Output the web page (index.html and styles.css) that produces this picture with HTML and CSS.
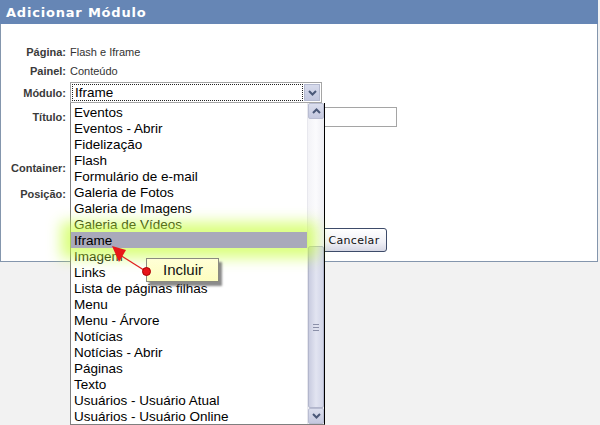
FILE: index.html
```html
<!DOCTYPE html>
<html lang="pt">
<head>
<meta charset="utf-8">
<title>Adicionar Módulo</title>
<link rel="stylesheet" href="styles.css">
</head>
<body>
<div class="window">
  <div class="header">Adicionar Módulo</div>
  <div class="panel">
    <div class="row r-pagina"><span class="label">Página:</span><span class="value">Flash e Iframe</span></div>
    <div class="row r-painel"><span class="label">Painel:</span><span class="value">Conteúdo</span></div>
    <div class="row r-modulo"><span class="label">Módulo:</span>
      <div class="select">
        <div class="select-text">Iframe</div>
        <div class="drop-btn"><svg width="9" height="6" viewBox="0 0 9 6"><path d="M1 1 L4.5 4.5 L8 1" fill="none" stroke="#4a5878" stroke-width="2"/></svg></div>
      </div>
    </div>
    <div class="row r-titulo"><span class="label">Título:</span><div class="input"></div></div>
    <div class="row r-container"><span class="label">Container:</span><div class="hidden-select"></div></div>
    <div class="row r-posicao"><span class="label">Posição:</span><div class="hidden-select"></div></div>
    <div class="row r-buttons"><span class="label"></span>
      <button class="btn btn-cancelar">Cancelar</button>
    </div>
  </div>
</div>

<div class="dropdown">
  <div class="items">
    <div class="item">Eventos</div>
    <div class="item">Eventos - Abrir</div>
    <div class="item">Fidelização</div>
    <div class="item">Flash</div>
    <div class="item">Formulário de e-mail</div>
    <div class="item">Galeria de Fotos</div>
    <div class="item">Galeria de Imagens</div>
    <div class="item">Galeria de Vídeos</div>
    <div class="item selected">Iframe</div>
    <div class="item">Imagem</div>
    <div class="item">Links</div>
    <div class="item">Lista de páginas filhas</div>
    <div class="item">Menu</div>
    <div class="item">Menu - Árvore</div>
    <div class="item">Notícias</div>
    <div class="item">Notícias - Abrir</div>
    <div class="item">Páginas</div>
    <div class="item">Texto</div>
    <div class="item">Usuários - Usuário Atual</div>
    <div class="item">Usuários - Usuário Online</div>
  </div>
  <div class="scrollbar">
    <div class="sb-btn"><svg width="9" height="6" viewBox="0 0 9 6"><path d="M1 5 L4.5 1.5 L8 5" fill="none" stroke="#4a5878" stroke-width="2"/></svg></div>
    <div class="sb-track"></div>
    <div class="sb-thumb"><div class="grip"></div><div class="grip"></div><div class="grip"></div></div>
    <div class="sb-btn"><svg width="9" height="6" viewBox="0 0 9 6"><path d="M1 1 L4.5 4.5 L8 1" fill="none" stroke="#4a5878" stroke-width="2"/></svg></div>
  </div>
</div>

<div class="glow"></div>

<svg class="arrow" width="60" height="40" viewBox="0 0 60 40">
  <line x1="37" y1="26" x2="10" y2="9" stroke="#e02020" stroke-width="1.3"/>
  <polygon points="2,0 16,4 9,16" fill="#e81818"/>
</svg>
<div class="tooltip">Incluir</div>
<div class="dot"></div>
</body>
</html>
```
FILE: styles.css
```css
html, body {
  margin: 0;
  padding: 0;
  overflow: hidden;
  width: 600px;
  height: 425px;
  background: #f2f2f2;
  font-family: "Liberation Sans", Arial, sans-serif;
}
.window {
  width: 598px;
}
.header {
  height: 24px;
  background: #6686b5;
  color: #fff;
  font-family: "DejaVu Sans", sans-serif;
  font-weight: bold;
  font-size: 13px;
  letter-spacing: 0.8px;
  line-height: 25px;
  padding-left: 6px;
}
.panel {
  background: #fff;
  border: 1px solid #8496ad;
  border-top: none;
  height: 238px;
  box-sizing: border-box;
  padding-top: 18px;
  display: flex;
  flex-direction: column;
}
.row {
  display: flex;
  align-items: center;
  gap: 4px;
}
.label {
  width: 65px;
  text-align: right;
  font-weight: bold;
  font-size: 11px;
  color: #3a3a3a;
  flex: none;
}
.value {
  font-size: 11px;
  color: #333;
}
.r-pagina { height: 19px; }
.r-painel { height: 19px; }
.r-modulo { height: 21px; margin-top: 2px; }
.r-titulo { height: 22px; margin-top: 3px; align-items: flex-start; }
.r-titulo .label { margin-top: 5px; }
.r-container { height: 21px; margin-top: 29px; }
.r-posicao { height: 21px; margin-top: 5px; }
.r-buttons { height: 24px; margin-top: 24px; gap: 4px; }

.select {
  width: 252px;
  height: 21px;
  box-sizing: border-box;
  border: 1px solid #a5a5a5;
  display: flex;
  padding: 1px;
  gap: 1px;
  background: #fff;
}
.select-text {
  flex: 1;
  border: 1px dotted #222;
  font-family: "Liberation Sans", Arial, sans-serif;
  font-size: 13.5px;
  line-height: 15px;
  padding-left: 2px;
  color: #000;
}
.drop-btn {
  width: 16px;
  background: linear-gradient(#d7dbec, #c2c7df);
  border: 1px solid #b4b9cf;
  box-sizing: border-box;
  display: flex;
  align-items: center;
  justify-content: center;
}
.input {
  width: 327px;
  height: 20px;
  box-sizing: border-box;
  border: 1px solid #a5a5a5;
  margin-top: 1px;
}
.hidden-select {
  width: 200px;
  height: 20px;
  border: 1px solid #a5a5a5;
  box-sizing: border-box;
}
.btn {
  height: 24px;
  border: 1px solid #3d4b69;
  border-radius: 3px;
  background: linear-gradient(#ffffff, #f0f0f6 60%, #d6d7e4);
  font-family: "DejaVu Sans", sans-serif;
  font-size: 11px;
  letter-spacing: 0.3px;
  color: #111;
  padding: 0 6px;
}
.btn-cancelar { margin-left: 251px; width: 66px; }

.dropdown {
  position: absolute;
  left: 70px;
  top: 103px;
  width: 255px;
  height: 322px;
  box-sizing: border-box;
  border: 1px solid #7f7f7f;
  border-right-color: #000;
  border-top: none;
  background: #fff;
  display: flex;
}
.items {
  flex: 1;
  padding-top: 1px;
}
.item {
  height: 16px;
  line-height: 17px;
  padding-left: 3px;
  font-family: "Liberation Sans", Arial, sans-serif;
  font-size: 13.5px;
  color: #000;
  white-space: nowrap;
}
.item.selected {
  background: #a9a9ba;
}
.scrollbar {
  width: 16px;
  display: flex;
  flex-direction: column;
  position: relative;
  background: linear-gradient(90deg, #f3f3f7, #fbfbfd 50%, #eeeef4);
  border-left: 1px solid #e8e8ee;
}
.sb-btn {
  height: 16px;
  box-sizing: border-box;
  border: 1px solid #b9bdd2;
  border-radius: 2px;
  background: linear-gradient(#dcdfee, #c4c8df);
  display: flex;
  align-items: center;
  justify-content: center;
  flex: none;
}
.sb-track {
  height: 127px;
  flex: none;
}
.sb-thumb {
  flex: 1;
  box-sizing: border-box;
  border: 1px solid #b2b6cc;
  border-radius: 2px;
  background: linear-gradient(90deg, #c9cce0, #e2e4f1 50%, #d2d5e8);
  display: flex;
  flex-direction: column;
  justify-content: center;
  align-items: center;
  gap: 2px;
}
.grip {
  width: 6px;
  height: 1px;
  background: #8a8fa8;
}

.glow {
  position: absolute;
  left: 71px;
  top: 232px;
  width: 236px;
  height: 16px;
  box-shadow: 0 0 14px 10px rgba(200, 255, 60, 0.65);
  pointer-events: none;
}
.arrow {
  position: absolute;
  left: 110px;
  top: 246px;
  overflow: visible;
}
.tooltip {
  position: absolute;
  left: 146px;
  top: 258px;
  width: 73px;
  height: 24px;
  box-sizing: border-box;
  border: 1px solid #8a8a80;
  background: linear-gradient(#ffffd6, #fdfdc0);
  box-shadow: 3px 4px 2px rgba(90, 90, 90, 0.7);
  font-family: "Liberation Sans", Arial, sans-serif;
  font-size: 15px;
  line-height: 22px;
  padding-left: 16px;
  color: #111;
}
.dot {
  position: absolute;
  left: 142px;
  top: 267px;
  width: 9px;
  height: 9px;
  border-radius: 50%;
  background: #e8141a;
  border: 1px solid #a00;
  box-sizing: border-box;
}
```
